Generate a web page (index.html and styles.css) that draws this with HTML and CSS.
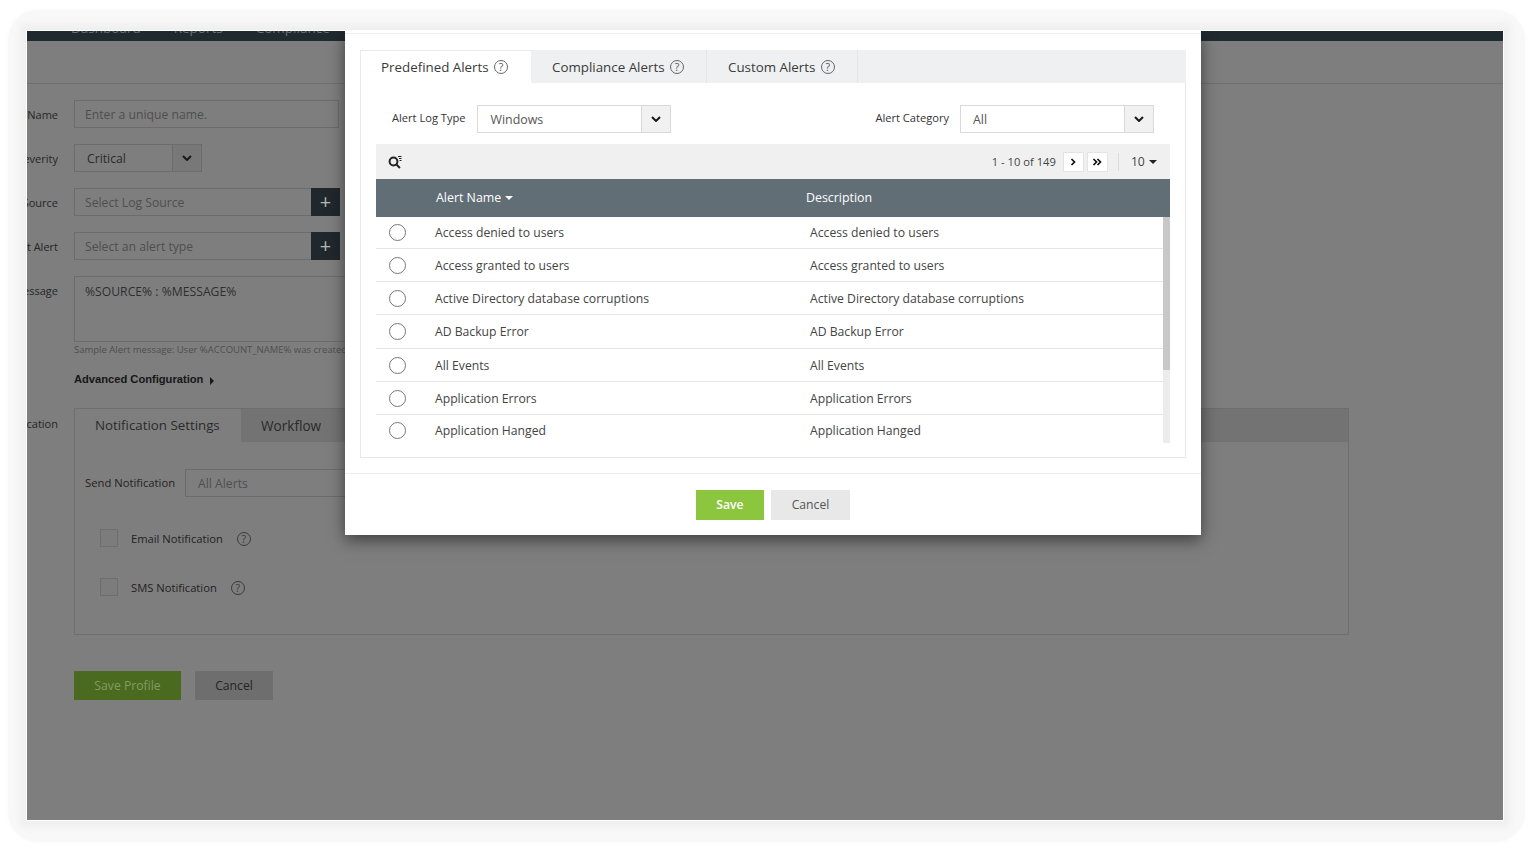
FILE: index.html
```html
<!DOCTYPE html>
<html lang="en">
<head>
<meta charset="utf-8">
<title>Alert Profile</title>
<link rel="stylesheet" href="styles.css">
</head>
<body>
<div class="halo">
<main class="frame">
  <nav class="topbar"><span>Dashboard</span><span>Reports</span><span>Compliance</span></nav>
  <div class="titleband"></div>
  <form class="form">
    <div class="frow"><label class="flabel">Profile Name</label><div class="field w265 muted">Enter a unique name.</div></div>
    <div class="frow"><label class="flabel">Severity</label><div class="field w128 sel"><span class="seltext">Critical</span><span class="arrow"><svg class="chev" viewBox="0 0 10 6"><path d="M1 1l4 4 4-4"/></svg></span></div></div>
    <div class="frow"><label class="flabel">Log Source</label><div class="field w266 muted addon"><span>Select Log Source</span><span class="plus">+</span></div></div>
    <div class="frow"><label class="flabel">Test Alert</label><div class="field w266 muted addon"><span>Select an alert type</span><span class="plus">+</span></div></div>
    <div class="frow msgrow"><label class="flabel">Alert Message</label><div class="msgcol">
      <div class="field textarea">%SOURCE% : %MESSAGE%</div>
      <p class="sample">Sample Alert message: User %ACCOUNT_NAME% was created on %SOURCE%</p>
      <p class="advanced">Advanced Configuration <span class="tri-right"></span></p>
    </div></div>
    <div class="frow notifrow"><label class="flabel">Notification</label>
      <div class="npanel">
        <div class="ntabs"><span class="ntab on">Notification Settings</span><span class="ntab">Workflow</span></div>
        <div class="nbody">
          <div class="sendrow"><span>Send Notification</span><div class="field sendsel muted">All Alerts</div></div>
          <div class="check first"><span class="box"></span><span>Email Notification</span><span class="help dim e">?</span></div>
          <div class="check"><span class="box"></span><span>SMS Notification</span><span class="help dim s">?</span></div>
        </div>
      </div>
    </div>
    <div class="actions"><span class="btn saveprofile">Save Profile</span><span class="btn cancelbg">Cancel</span></div>
  </form>

  <section class="modal">
    <div class="panel">
      <div class="mtabs">
        <span class="mtab on">Predefined Alerts <span class="help">?</span></span>
        <span class="mtab">Compliance Alerts <span class="help">?</span></span>
        <span class="mtab">Custom Alerts <span class="help">?</span></span>
      </div>
      <div class="filters">
        <div class="filter"><span>Alert Log Type</span><div class="msel"><span class="mseltext">Windows</span><span class="marrow"><svg class="chev" viewBox="0 0 10 6"><path d="M1 1l4 4 4-4"/></svg></span></div></div>
        <div class="filter"><span>Alert Category</span><div class="msel"><span class="mseltext">All</span><span class="marrow"><svg class="chev" viewBox="0 0 10 6"><path d="M1 1l4 4 4-4"/></svg></span></div></div>
      </div>
      <div class="tbl">
        <div class="toolbar">
          <svg class="search" viewBox="0 0 14 14"><circle cx="5.5" cy="6.5" r="3.9"/><path d="M8.3 9.4l3.6 3.6"/><path class="thin" d="M10 1.5h3.5M11 3.5h2.5M11.5 5.5h2"/></svg>
          <div class="pager">
            <span>1 - 10 of 149</span>
            <span class="pg"><svg viewBox="0 0 8 8"><path d="M2.5 1l3 3-3 3"/></svg></span>
            <span class="pg"><svg viewBox="0 0 10 8"><path d="M1.5 1l3 3-3 3M5.5 1l3 3-3 3"/></svg></span>
            <span class="sep"></span>
            <span class="size">10 <span class="tri-down dark"></span></span>
          </div>
        </div>
        <div class="thead"><span>Alert Name <span class="tri-down"></span></span><span>Description</span></div>
        <div class="tbody">
          <div class="rows">
            <div class="row"><span class="radio"></span><span>Access denied to users</span><span>Access denied to users</span></div>
            <div class="row"><span class="radio"></span><span>Access granted to users</span><span>Access granted to users</span></div>
            <div class="row"><span class="radio"></span><span>Active Directory database corruptions</span><span>Active Directory database corruptions</span></div>
            <div class="row"><span class="radio"></span><span>AD Backup Error</span><span>AD Backup Error</span></div>
            <div class="row"><span class="radio"></span><span>All Events</span><span>All Events</span></div>
            <div class="row"><span class="radio"></span><span>Application Errors</span><span>Application Errors</span></div>
            <div class="row"><span class="radio"></span><span>Application Hanged</span><span>Application Hanged</span></div>
          </div>
          <div class="scroll"><div class="thumb"></div></div>
        </div>
      </div>
    </div>
    <div class="mfoot"><span class="btn save">Save</span><span class="btn cancel">Cancel</span></div>
  </section>
</main>
</div>
</body>
</html>
```
FILE: styles.css
```css
* { box-sizing: border-box; }
html, body { margin: 0; height: 100%; }
body {
  background: #fff;
  padding: 10px 9px 10px 8px;
  font-family: "Open Sans", "Noto Sans", sans-serif;
  font-size: 12px;
  color: #222;
  overflow: hidden;
}
.halo {
  height: 832px;
  padding: 21px 22px 22px 19px;
  background: #f8f8f8;
  border-radius: 30px;
  box-shadow: 0 0 5px 1px #fbfbfb;
}
.frame {
  position: relative;
  height: 789px;
  background: #7e7e7e;
  overflow: hidden;
  box-shadow: 0 0 0 1px #fff, 0 0 7px 7px #efefef;
}
.topbar {
  height: 10px;
  background: #1f2a30;
  color: #6a7074;
  display: flex;
  gap: 33px;
  padding-left: 44px;
  font-size: 13.5px;
  align-items: flex-start;
  overflow: hidden;
}
.topbar span { margin-top: -8px; line-height: 10px; }
.titleband { height: 43px; border-bottom: 1px solid #6f6f6f; }
.form { padding: 16px 154px 0 0; }
.frow { display: flex; gap: 16px; margin-bottom: 17px; height: 27px; }
.flabel {
  width: 31px;
  flex: none;
  display: flex;
  justify-content: flex-end;
  overflow: hidden;
  white-space: nowrap;
  font-size: 11px;
  line-height: 29px;
  color: #262626;
}
.field {
  height: 28px;
  border: 1px solid #6c6c6c;
  font-size: 12.2px;
  line-height: 28px;
  padding-left: 10px;
  color: #2e2e2e;
}
.muted { color: #4e4e4e; }
.w265 { width: 265px; }
.w266 { width: 266px; }
.w128 { width: 128px; }
.sel { display: flex; padding: 0; }
.seltext { flex: 1; padding-left: 12px; color: #2a2a2a; }
.arrow { width: 29px; border-left: 1px solid #6c6c6c; background: #787878; display: flex; align-items: center; justify-content: center; }
.chev { width: 10px; height: 6px; fill: none; stroke: #1a1a1a; stroke-width: 2; }
.addon { display: flex; justify-content: space-between; padding-right: 0; }
.plus {
  width: 29px;
  height: 28px;
  margin: -1px -1px 0 0;
  background: #20282d;
  color: #b5b8ba;
  font-size: 20px;
  line-height: 27px;
  text-align: center;
}
.msgrow { height: auto; margin-bottom: 0; }
.msgcol { flex: 1; min-width: 0; overflow: hidden; }
.textarea { height: 66px; width: 600px; line-height: 29px; }
.sample { margin: 1px 0 0; height: 14px; font-size: 9.5px; line-height: 14px; color: #4f4f4f; white-space: nowrap; }
.advanced { margin: 15px 0 0; height: 15px; font-family: "Liberation Sans", Arial, sans-serif; font-weight: 700; font-size: 11.15px; line-height: 15px; color: #161616; }
.tri-right { display: inline-block; margin-left: 4px; border-left: 4px solid #1a1a1a; border-top: 4px solid transparent; border-bottom: 4px solid transparent; vertical-align: -2px; }
.notifrow { margin-top: 21px; height: 227px; margin-bottom: 36px; }
.notifrow .flabel { line-height: 31px; }
.npanel { flex: 1; border: 1px solid #6e6e6e; }
.ntabs { height: 33px; background: #737373; display: flex; font-size: 13.6px; line-height: 33px; }
.ntab { padding: 0 20px; color: #2a2a2a; white-space: nowrap; }
.ntab.on { background: #7e7e7e; width: 166px; font-size: 13.3px; }
.nbody { padding: 26px 10px 0; }
.sendrow { display: flex; align-items: center; gap: 10px; font-size: 11.25px; color: #222; }
.sendsel { width: 400px; margin-top: 1px; padding-left: 12px; font-size: 12.2px; }
.check { display: flex; align-items: center; height: 18px; margin: 31px 0 0 15px; font-size: 11.2px; color: #222; }
.check.first { margin-top: 32px; }
.box { width: 18px; height: 18px; border: 1px solid #6e6e6e; margin-right: 13px; background: #7c7c7c; flex: none; }
.help {
  display: inline-block;
  width: 14px;
  height: 14px;
  border: 1px solid #666;
  border-radius: 50%;
  font-size: 10.5px;
  line-height: 12px;
  text-align: center;
  color: #555;
  vertical-align: 1px;
  margin-left: 2px;
}
.help.dim { border-color: #3b3b3b; color: #3b3b3b; }
.help.e, .help.s { margin-left: 14px; margin-top: 2px; }
.actions { display: flex; gap: 14px; padding-left: 47px; }
.btn { display: block; text-align: center; }
.saveprofile { width: 107px; height: 29px; line-height: 29px; background: #4a6a1f; color: #839a62; font-size: 12.2px; }
.cancelbg { width: 78px; height: 29px; line-height: 29px; background: #6e6e6e; color: #242424; font-size: 12.2px; }

.modal {
  position: absolute;
  left: 318px;
  top: 0;
  width: 856px;
  height: 504px;
  background: #fff;
  box-shadow: 0 5px 15px rgba(0,0,0,.5);
  padding: 19px 15px 0;
}
.modal::before { content: ""; display: block; position: absolute; left: 0; right: 0; top: 2px; height: 1px; background: #eee; }
.panel { height: 408px; border: 1px solid #e8e8e8; border-top: 0; }
.mtabs { height: 33px; margin: 0 -1px; background: #eef0f1; display: flex; font-size: 13.35px; line-height: 34px; color: #3a3a3a; }
.mtab { padding: 0 22px 0 21px; border-right: 1px solid #e3e5e6; white-space: nowrap; }
.mtab.on { background: #fff; width: 171px; border-right: 0; box-shadow: inset 1px 1px #e8e8e8; }
.filters { height: 61px; display: flex; justify-content: space-between; padding: 22px 31px 0 31px; }
.filter { display: flex; gap: 11px; font-size: 11.1px; line-height: 26px; color: #333; }
.filter:first-child { gap: 12px; }
.msel { width: 194px; height: 28px; border: 1px solid #d9d9d9; display: flex; font-size: 12.4px; line-height: 28px; color: #555; }
.mseltext { flex: 1; padding-left: 12px; }
.marrow { width: 29px; border-left: 1px solid #d9d9d9; background: #f1f1f1; display: flex; align-items: center; justify-content: center; }
.tbl { margin: 0 15px; }
.toolbar { height: 35px; background: #f0f0f0; display: flex; align-items: center; justify-content: space-between; padding: 0 13px 0 12px; }
.search { width: 14px; height: 14px; fill: none; stroke: #222; stroke-width: 2; }
.search .thin { stroke-width: 1; }
.pager { display: flex; align-items: center; gap: 6px; font-size: 11.2px; color: #444; }
.pg { width: 21px; height: 20px; background: #fff; border: 1px solid #e4e4e4; display: flex; align-items: center; justify-content: center; margin-left: 1px; }
.pg + .pg { margin-left: -3px; }
.pg svg { height: 8px; width: 10px; fill: none; stroke: #111; stroke-width: 1.7; }
.sep { width: 1px; height: 18px; background: #dcdcdc; margin: 0 6px 0 4px; }
.size { font-size: 12.2px; }
.tri-down { display: inline-block; border-top: 4px solid #fff; border-left: 4px solid transparent; border-right: 4px solid transparent; vertical-align: 2px; margin-left: 1px; }
.tri-down.dark { border-top-color: #222; }
.thead { height: 38px; background: #616e76; color: #fff; font-size: 12.4px; line-height: 37px; display: grid; grid-template-columns: 370px 1fr; padding-left: 60px; }
.tbody { display: flex; height: 226px; }
.rows { flex: 1; min-width: 0; }
.row { height: 33px; display: grid; grid-template-columns: 59px 375px 1fr; align-items: center; border-bottom: 1px solid #e4e4e4; color: #444; font-size: 12.2px; }
.row:first-child { height: 32px; }
.row:nth-child(4) { height: 34px; }
.row:last-child { height: 28px; border-bottom: 0; align-items: start; padding-top: 7px; }
.radio { width: 17px; height: 17px; margin-left: 13px; border: 1.5px solid #777; border-radius: 50%; background: #fff; }
.scroll { width: 7px; background: #ececec; }
.thumb { height: 153px; background: #c8c8c8; }
.mfoot { margin: 15px -15px 0; padding-top: 16px; border-top: 1px solid #ececec; display: flex; justify-content: center; gap: 7px; }
.save { width: 68px; height: 30px; line-height: 30px; background: #8cc63e; color: #fff; font-size: 12.2px; font-weight: 600; }
.cancel { width: 79px; height: 30px; line-height: 30px; background: #e8e8e8; color: #555; font-size: 12.2px; }
```
